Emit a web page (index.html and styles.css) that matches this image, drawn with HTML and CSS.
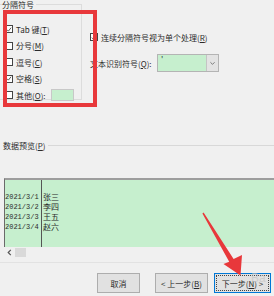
FILE: index.html
```html
<!DOCTYPE html>
<html lang="zh-CN">

<head>
    <meta charset="UTF-8" />
    <meta name="viewport" content="width=device-width, initial-scale=1.0" />
    <title>文本导入向导</title>
    <link rel="stylesheet" href="styles.css">
</head>

<body>
    <div class="wizard">
        <!-- 分隔符号 + 右侧选项 -->
        <div class="top">
            <div class="group">
                <div class="group-title">分隔符号</div>
                <div class="opts">
                    <div class="opt"><span class="box"><svg viewBox="0 0 8 8"><path d="M1.2 4.2 L3.2 6.2 L6.8 1.6" /></svg></span>Tab 键(<u>T</u>)</div>
                    <div class="opt"><span class="box"></span>分号(<u>M</u>)</div>
                    <div class="opt"><span class="box"></span>逗号(<u>C</u>)</div>
                    <div class="opt"><span class="box"><svg viewBox="0 0 8 8"><path d="M1.2 4.2 L3.2 6.2 L6.8 1.6" /></svg></span>空格(<u>S</u>)</div>
                    <div class="opt"><span class="box"></span>其他(<u>O</u>):<span class="other-input"></span></div>
                </div>
            </div>
            <div class="side">
                <div class="opt"><span class="box"><svg viewBox="0 0 8 8"><path d="M1.2 4.2 L3.2 6.2 L6.8 1.6" /></svg></span>连续分隔符号视为单个处理(<u>R</u>)</div>
                <div class="qualifier">
                    <span class="q-label">文本识别符号(<u>Q</u>):</span>
                    <div class="select">
                        <span class="val">'</span>
                        <span class="drop"><svg viewBox="0 0 8 6"><path d="M1.5 1.5 L4 4 L6.5 1.5" /></svg></span>
                    </div>
                </div>
            </div>
        </div>

        <!-- 数据预览 -->
        <div class="preview-title"><span>数据预览(<u>P</u>)</span></div>
        <div class="preview">
            <div class="col col-date">
                <div>2021/3/1</div>
                <div>2021/3/2</div>
                <div>2021/3/3</div>
                <div>2021/3/4</div>
            </div>
            <div class="col col-name">
                <div>张三</div>
                <div>李四</div>
                <div>王五</div>
                <div>赵六</div>
            </div>
        </div>
        <div class="hscroll">
            <svg class="left" viewBox="0 0 5 7"><path d="M3.8 0.8 L1.2 3.5 L3.8 6.2" /></svg>
            <span class="thumb"></span>
        </div>
        <div class="sep"></div>

        <!-- 按钮 -->
        <div class="buttons">
            <a href="javascript:;" class="btn btn-cancel">取消</a>
            <a href="javascript:;" class="btn btn-prev">&lt; 上一步(<u>B</u>)</a>
            <a href="javascript:;" class="btn btn-next">下一步(<u>N</u>) &gt;</a>
        </div>

        <!-- 标注 -->
        <div class="mark"></div>
        <svg class="arrow" viewBox="0 0 274 296">
            <polygon points="202.4,213.4 203.6,212.6 233.6,258.9 242,255 240.5,275.5 223.5,264 229.2,261.8" />
        </svg>
        <div class="watermark">Ba</div>
    </div>
</body>

</html>
```

FILE: styles.css
```css
* {
    margin: 0;
    padding: 0;
    box-sizing: border-box;
}

body {
    background-color: #f0f0f0;
}

.wizard {
    position: relative;
    overflow: hidden;
    width: 274px;
    height: 296px;
    background-color: #f0f0f0;
    font-family: "Noto Sans CJK SC", "Microsoft YaHei", sans-serif;
    font-size: 8px;
    color: #2b2b2b;
}

u {
    text-decoration: underline;
}

.top {
    display: flex;
    height: 140px;
}

/* 分隔符号 */
.group {
    margin-top: 4px;
    width: 82px;
    height: 96px;
    border: 1px solid #dcdcdc;
    border-left: 0;
    padding-left: 5px;
}

.group-title {
    display: inline-block;
    margin-top: -5px;
    margin-left: -3px;
    padding-right: 2px;
    line-height: 10px;
    background-color: #f0f0f0;
    vertical-align: top;
}

.opts {
    padding-top: 5px;
}

.opt {
    display: flex;
    align-items: center;
    height: 16.5px;
    white-space: nowrap;
}

.box {
    display: flex;
    align-items: center;
    justify-content: center;
    width: 8px;
    height: 8px;
    margin-right: 3px;
    border: 1px solid #444;
    background-color: #fff;
}

.box svg {
    width: 7px;
    height: 7px;
    fill: none;
    stroke: #333;
    stroke-width: 1.1;
}

.other-input {
    width: 23px;
    height: 12px;
    margin-left: 5px;
    border: 1px solid #c8c8c8;
    background-color: #c6efce;
}

/* 右侧选项 */
.side {
    margin-left: 8px;
    padding-top: 29px;
}

.side .opt {
    height: 16px;
}

.qualifier {
    display: flex;
    align-items: center;
    margin-top: 9px;
    height: 18px;
}

.q-label {
    width: 67px;
    white-space: nowrap;
}

.select {
    display: flex;
    width: 62px;
    height: 18px;
    border: 1px solid #b4b4b4;
    background-color: #c6efce;
}

.select .val {
    flex: 1;
    padding-left: 3px;
    line-height: 10px;
}

.select .drop {
    display: flex;
    align-items: center;
    justify-content: center;
    width: 12px;
    border-left: 1px solid #c4c4c4;
    background-color: #e3e3e3;
}

.select .drop svg {
    width: 7px;
    height: 5px;
    fill: none;
    stroke: #666;
    stroke-width: 1;
}

/* 数据预览 */
.preview-title {
    display: flex;
    align-items: center;
    height: 10px;
    padding-left: 3px;
}

.preview-title::after {
    content: "";
    flex: 1;
    height: 1px;
    margin-left: 2px;
    background-color: #d8d8d8;
}

.preview {
    display: flex;
    margin-top: 28px;
    margin-left: 4px;
    height: 69px;
    border-top: 2px solid #9d9d9d;
    border-left: 1px solid #6a6a6a;
    background-color: #c6efce;
}

.col {
    padding-top: 12px;
    line-height: 10px;
}

.col-date {
    width: 37px;
    border-right: 1px solid #555;
    font-family: "Liberation Mono", monospace;
    font-size: 7px;
}

.col-name {
    padding-left: 1px;
}

.hscroll {
    display: flex;
    align-items: center;
    height: 11px;
    padding-left: 7px;
}

.hscroll .left {
    width: 5px;
    height: 7px;
    fill: none;
    stroke: #555;
    stroke-width: 1.2;
}

.hscroll .thumb {
    width: 11px;
    height: 9px;
    margin-left: 3px;
    background-color: #d9d9d9;
}

.sep {
    margin-top: 4px;
    height: 1px;
    background-color: #e2e2e2;
}

/* 按钮 */
.buttons {
    display: flex;
    margin-top: 10px;
    padding-left: 97px;
}

.btn {
    display: flex;
    align-items: center;
    justify-content: center;
    height: 20px;
    border: 1px solid #adadad;
    background-color: #e1e1e1;
    color: #2b2b2b;
    text-decoration: none;
    white-space: nowrap;
}

.btn-cancel {
    width: 43px;
}

.btn-prev {
    width: 53px;
    margin-left: 15px;
}

.btn-next {
    width: 57px;
    margin-left: 6px;
    border-color: #0078d7;
    outline: 1px dotted #444;
    outline-offset: -3px;
}

/* 标注 */
.mark {
    position: absolute;
    left: 3px;
    top: 10px;
    width: 94px;
    height: 97px;
    border: 4px solid #e8383b;
}

.arrow {
    position: absolute;
    left: 0;
    top: 0;
    width: 274px;
    height: 296px;
    fill: #e8383b;
}

.watermark {
    position: absolute;
    left: 251px;
    top: 271px;
    font-family: "Liberation Sans", sans-serif;
    font-size: 12px;
    color: rgba(190, 190, 190, 0.6);
}
```
